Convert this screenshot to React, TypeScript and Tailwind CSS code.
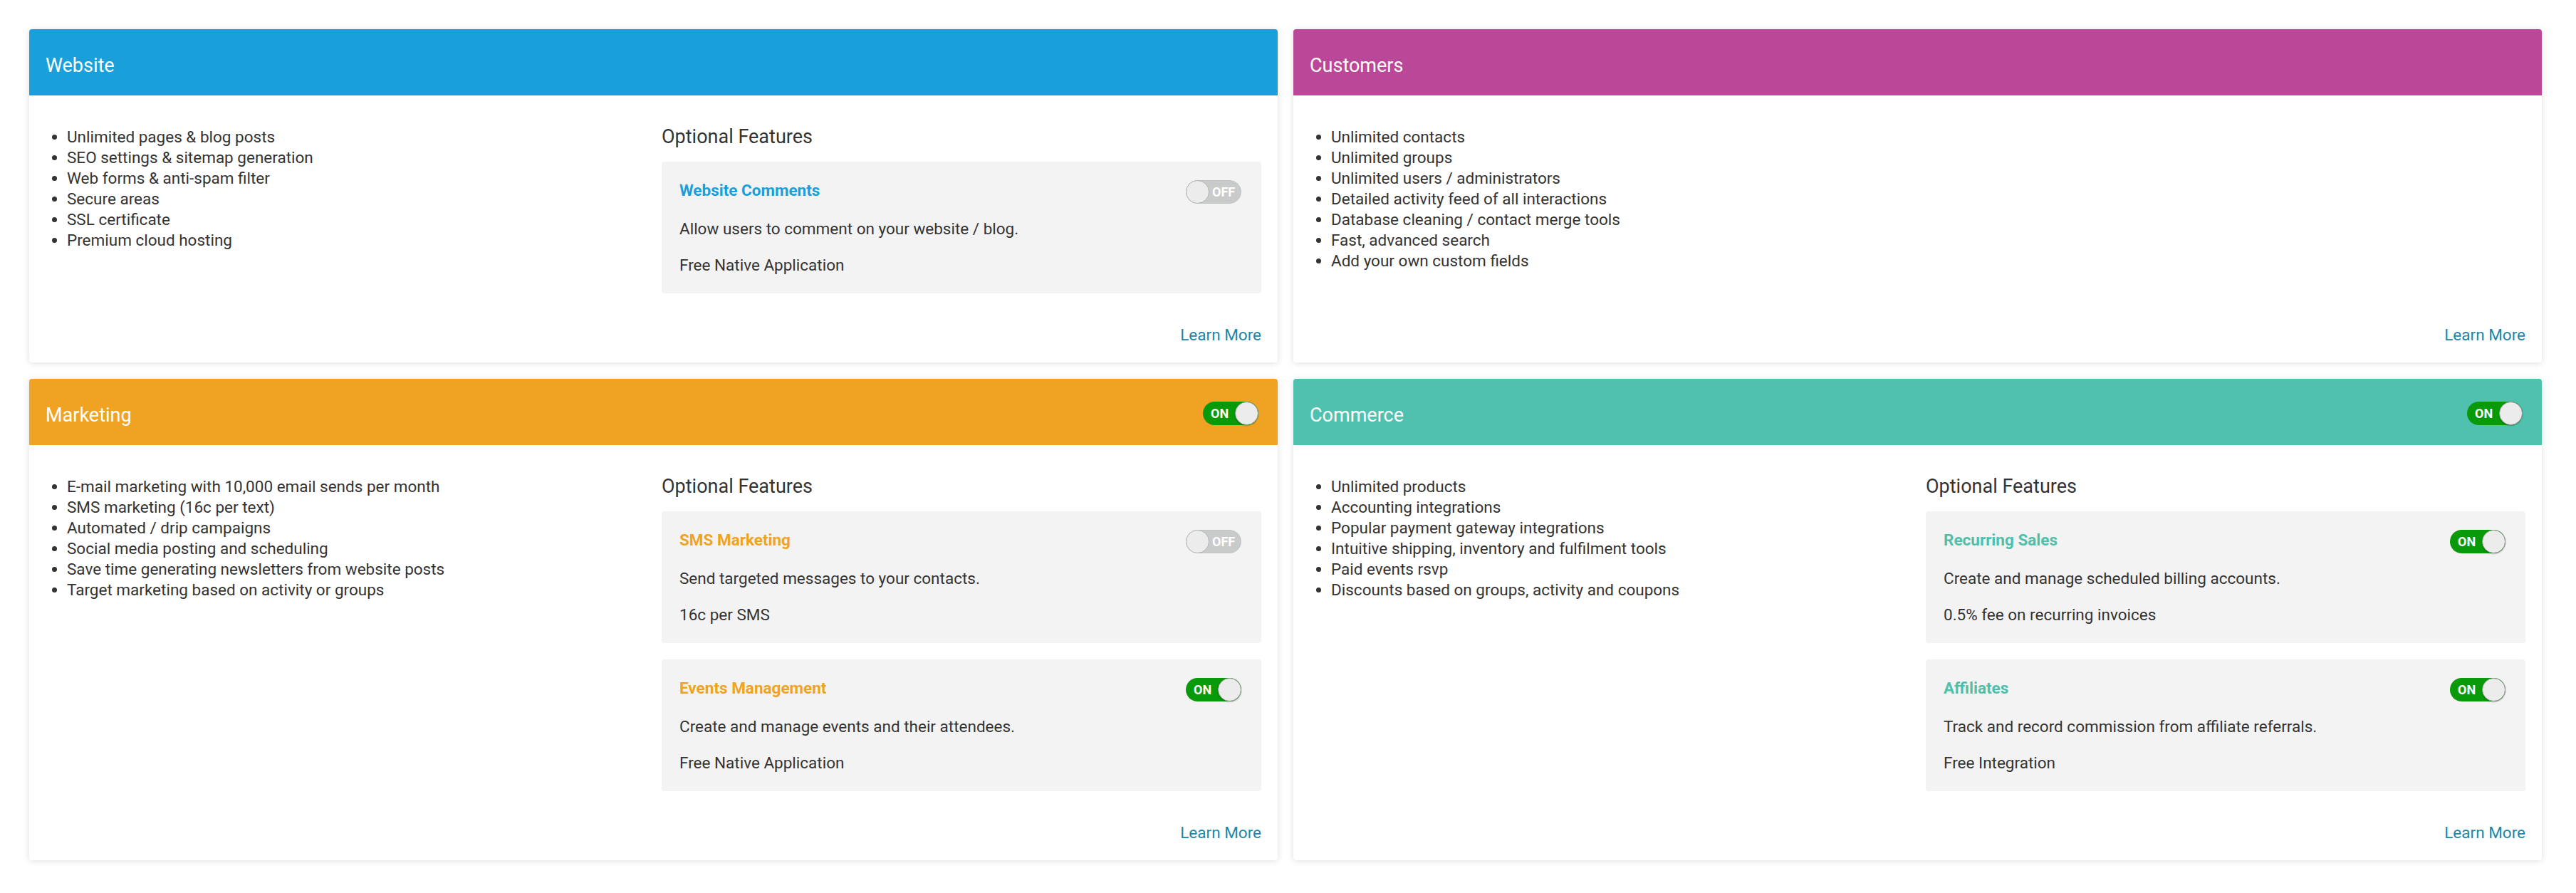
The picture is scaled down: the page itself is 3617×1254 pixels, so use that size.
import React from "react";

type Feature = { title: string; desc: string; note: string; on: boolean };
type CardData = {
  title: string;
  headerBg: string;
  titleColor: string;
  toggle?: boolean;
  items: string[];
  features?: Feature[];
};

function Toggle({ on }: { on: boolean }) {
  if (on) {
    return (
      <div className="relative w-[78px] h-[33px] shrink-0 rounded-full bg-[#089a08]">
        <span className="absolute left-[11px] top-0 leading-[33px] text-[18px] font-bold text-white">ON</span>
        <span className="absolute right-0 top-0 w-[33px] h-[33px] rounded-full bg-[#ececec] border border-[#9a9a9a] shadow-[0_1px_2px_rgba(0,0,0,0.25)]"></span>
      </div>
    );
  }
  return (
    <div className="relative w-[78px] h-[33px] shrink-0 rounded-full bg-[#c9cbcb] border border-[#bfc2c2]">
      <span className="absolute left-[36px] top-0 leading-[31px] text-[18px] font-bold text-white">OFF</span>
      <span className="absolute left-[-1px] top-[-1px] w-[33px] h-[33px] rounded-full bg-[#ececec] border border-[#b0b4b4]"></span>
    </div>
  );
}

function FeatureBox({ f, titleClass }: { f: Feature; titleClass: string }) {
  return (
    <div className="rounded-[4px] bg-[#f3f3f3] pl-[25px] pr-[28px] pt-[26px] pb-[25px]">
      <div className="flex items-start justify-between h-[33px]">
        <div className={"text-[22.5px] leading-[29px] font-bold " + titleClass}>{f.title}</div>
        <Toggle on={f.on} />
      </div>
      <p className="mt-[21px] text-[22.5px] leading-[29px] text-[#333]">{f.desc}</p>
      <p className="mt-[22px] text-[22.5px] leading-[29px] text-[#333]">{f.note}</p>
    </div>
  );
}

function Card({ c }: { c: CardData }) {
  return (
    <div className="flex flex-col rounded-[4px] bg-white shadow-[0_1px_10px_rgba(0,0,0,0.13)] overflow-hidden">
      <div className={"flex h-[93px] items-center justify-between pl-[23px] pr-[27px] " + c.headerBg}>
        <div className="mt-[8px] text-[27px] leading-[32px] text-white">{c.title}</div>
        {c.toggle ? (
          <div className="mt-[3px]">
            <Toggle on={true} />
          </div>
        ) : null}
      </div>
      <div className="flex-1 grid grid-cols-[1fr_842px] px-[23px] pt-[42px]">
        <ul className="list-disc pl-[30px] mt-[2px] text-[22.5px] leading-[29px] text-[#333]">
          {c.items.map((it) => (
            <li key={it}>{it}</li>
          ))}
        </ul>
        {c.features ? (
          <div className="flex flex-col">
            <div className="text-[27px] leading-[32px] text-[#333] mb-[19px]">Optional Features</div>
            <div className="flex flex-col gap-[23px]">
              {c.features.map((f) => (
                <FeatureBox key={f.title} f={f} titleClass={c.titleColor} />
              ))}
            </div>
          </div>
        ) : (
          <div></div>
        )}
      </div>
      <div className="flex justify-end px-[23px] pt-[44px] pb-[24px]">
        <a className="text-[22.5px] leading-[29px] text-[#1b86a8]">Learn More</a>
      </div>
    </div>
  );
}

const cards: CardData[] = [
  {
    title: "Website",
    headerBg: "bg-[#199fda]",
    titleColor: "text-[#199fda]",
    items: [
      "Unlimited pages & blog posts",
      "SEO settings & sitemap generation",
      "Web forms & anti-spam filter",
      "Secure areas",
      "SSL certificate",
      "Premium cloud hosting",
    ],
    features: [
      {
        title: "Website Comments",
        desc: "Allow users to comment on your website / blog.",
        note: "Free Native Application",
        on: false,
      },
    ],
  },
  {
    title: "Customers",
    headerBg: "bg-[#ba4797]",
    titleColor: "text-[#ba4797]",
    items: [
      "Unlimited contacts",
      "Unlimited groups",
      "Unlimited users / administrators",
      "Detailed activity feed of all interactions",
      "Database cleaning / contact merge tools",
      "Fast, advanced search",
      "Add your own custom fields",
    ],
  },
  {
    title: "Marketing",
    headerBg: "bg-[#f0a323]",
    titleColor: "text-[#f0a323]",
    toggle: true,
    items: [
      "E-mail marketing with 10,000 email sends per month",
      "SMS marketing (16c per text)",
      "Automated / drip campaigns",
      "Social media posting and scheduling",
      "Save time generating newsletters from website posts",
      "Target marketing based on activity or groups",
    ],
    features: [
      {
        title: "SMS Marketing",
        desc: "Send targeted messages to your contacts.",
        note: "16c per SMS",
        on: false,
      },
      {
        title: "Events Management",
        desc: "Create and manage events and their attendees.",
        note: "Free Native Application",
        on: true,
      },
    ],
  },
  {
    title: "Commerce",
    headerBg: "bg-[#50c1af]",
    titleColor: "text-[#4fbfab]",
    toggle: true,
    items: [
      "Unlimited products",
      "Accounting integrations",
      "Popular payment gateway integrations",
      "Intuitive shipping, inventory and fulfilment tools",
      "Paid events rsvp",
      "Discounts based on groups, activity and coupons",
    ],
    features: [
      {
        title: "Recurring Sales",
        desc: "Create and manage scheduled billing accounts.",
        note: "0.5% fee on recurring invoices",
        on: true,
      },
      {
        title: "Affiliates",
        desc: "Track and record commission from affiliate referrals.",
        note: "Free Integration",
        on: true,
      },
    ],
  },
];

export default function App() {
  return (
    <div
      className="min-h-screen bg-white pl-[41px] pr-[48px] pt-[41px] pb-[46px]"
      style={{ fontFamily: "Roboto, 'Noto Sans', Arial, sans-serif" }}
    >
      <div className="grid grid-cols-2 gap-x-[22px] gap-y-[23px]">
        {cards.map((c) => (
          <Card key={c.title} c={c} />
        ))}
      </div>
    </div>
  );
}
